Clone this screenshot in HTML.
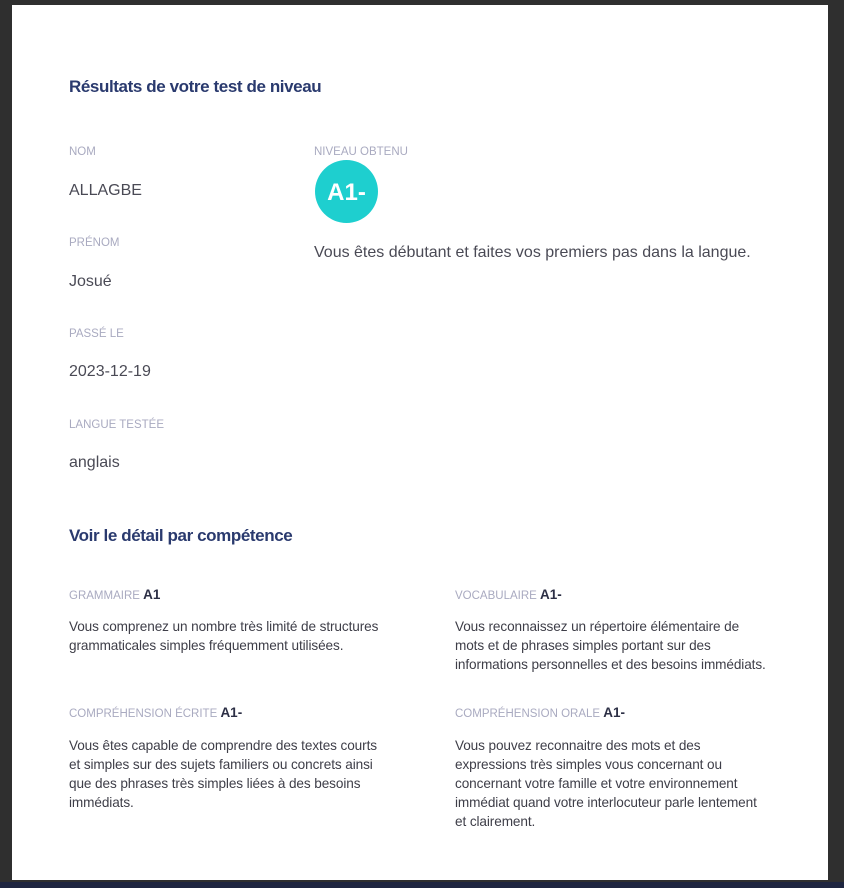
<!DOCTYPE html>
<html><head><meta charset="utf-8"><style>
html,body{margin:0;padding:0}
body{width:844px;height:888px;background:#2f2f2f;position:relative;overflow:hidden;font-family:"Liberation Sans",sans-serif}
.page{position:absolute;left:12px;top:5px;width:816px;height:875px;background:#fff}
.strip{position:absolute;left:0;top:882px;width:844px;height:6px;background:#1e2540}
h{position:absolute;font-size:17px;font-weight:bold;color:#2a3a6e;letter-spacing:-0.4px;white-space:nowrap}
.l{position:absolute;font-size:11.5px;color:#a9aac0;white-space:nowrap}
.v{position:absolute;font-size:16px;color:#4a4a55;white-space:nowrap}
.l b{color:#2c2f45;font-size:13.5px}
.t{position:absolute;font-size:13.6px;line-height:19px;color:#3e3e48;letter-spacing:-0.1px;white-space:nowrap}
.c{position:absolute;left:315px;top:160px;width:63px;height:63px;border-radius:50%;background:#1ecfcf;color:#fff;font-weight:bold;font-size:24px;line-height:65px;text-align:center}
</style></head><body>
<div class="page"></div>
<div class="strip"></div>
<h style="left:69px;top:77px">Résultats de votre test de niveau</h>
<div class="l" style="left:69px;top:146px">NOM</div>
<div class="v" style="left:69px;top:182px">ALLAGBE</div>
<div class="l" style="left:69px;top:237px">PRÉNOM</div>
<div class="v" style="left:69px;top:273px">Josué</div>
<div class="l" style="left:69px;top:328px">PASSÉ LE</div>
<div class="v" style="left:69px;top:363px">2023-12-19</div>
<div class="l" style="left:69px;top:419px">LANGUE TESTÉE</div>
<div class="v" style="left:69px;top:454px">anglais</div>
<div class="l" style="left:314px;top:146px">NIVEAU OBTENU</div>
<div class="c">A1-</div>
<div class="v" style="left:314px;top:244px">Vous êtes débutant et faites vos premiers pas dans la langue.</div>
<h style="left:69px;top:526px">Voir le détail par compétence</h>
<div class="l" style="left:69px;top:587px">GRAMMAIRE <b>A1</b></div>
<div class="t" style="left:69px;top:617px">Vous comprenez un nombre très limité de structures<br>grammaticales simples fréquemment utilisées.</div>
<div class="l" style="left:455px;top:587px">VOCABULAIRE <b>A1-</b></div>
<div class="t" style="left:455px;top:617px">Vous reconnaissez un répertoire élémentaire de<br>mots et de phrases simples portant sur des<br>informations personnelles et des besoins immédiats.</div>
<div class="l" style="left:69px;top:705px">COMPRÉHENSION ÉCRITE <b>A1-</b></div>
<div class="t" style="left:69px;top:736px">Vous êtes capable de comprendre des textes courts<br>et simples sur des sujets familiers ou concrets ainsi<br>que des phrases très simples liées à des besoins<br>immédiats.</div>
<div class="l" style="left:455px;top:705px">COMPRÉHENSION ORALE <b>A1-</b></div>
<div class="t" style="left:455px;top:736px">Vous pouvez reconnaitre des mots et des<br>expressions très simples vous concernant ou<br>concernant votre famille et votre environnement<br>immédiat quand votre interlocuteur parle lentement<br>et clairement.</div>
</body></html>
